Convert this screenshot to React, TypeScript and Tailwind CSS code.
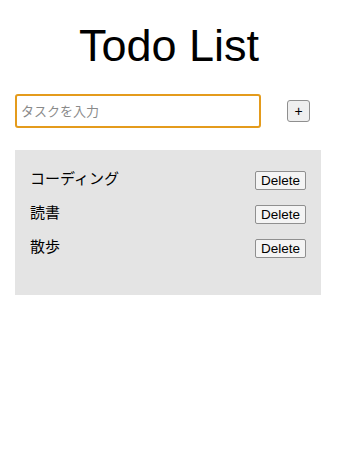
import React, { useState } from "react";

const font = { fontFamily: '"Liberation Sans", "Noto Sans CJK JP", sans-serif' };

export default function App() {
  const [todos, setTodos] = useState<string[]>(["コーディング", "読書", "散歩"]);
  const [text, setText] = useState("");

  const addTodo = () => {
    if (!text.trim()) return;
    setTodos([...todos, text.trim()]);
    setText("");
  };

  return (
    <div className="w-[338px] h-[468px] bg-white text-black" style={font}>
      <h1 className="pt-[22px] text-center text-[45px] leading-[48px] font-normal">Todo List</h1>

      <div className="mt-[24px] flex items-center pl-[15px] pr-[28px]">
        <input
          type="text"
          value={text}
          onChange={(e) => setText(e.target.value)}
          placeholder="タスクを入力"
          className="w-[246px] h-[34px] border-2 border-[#e49b1c] rounded-[3px] px-[4px] text-[13px] placeholder:text-[#8a8a8a] outline-none"
        />
        <button
          onClick={addTodo}
          className="ml-auto w-[23px] h-[22px] bg-[#efefef] border border-[#8f8f8f] rounded-[3px] text-[14px] leading-none flex items-center justify-center"
        >
          +
        </button>
      </div>

      <ul className="mt-[22px] ml-[15px] w-[306px] h-[145px] bg-[#e4e4e4] px-[15px] pt-[20px] flex flex-col gap-[12px]">
        {todos.map((todo, i) => (
          <li key={i} className="flex items-start justify-between h-[22px]">
            <span className="text-[15px] leading-[18px]">{todo}</span>
            <button
              onClick={() => setTodos(todos.filter((_, j) => j !== i))}
              className="mt-[1px] h-[19px] px-[5px] bg-[#f4f4f4] border border-[#8f8f8f] rounded-[2px] text-[13.5px] leading-none"
            >
              Delete
            </button>
          </li>
        ))}
      </ul>
    </div>
  );
}
